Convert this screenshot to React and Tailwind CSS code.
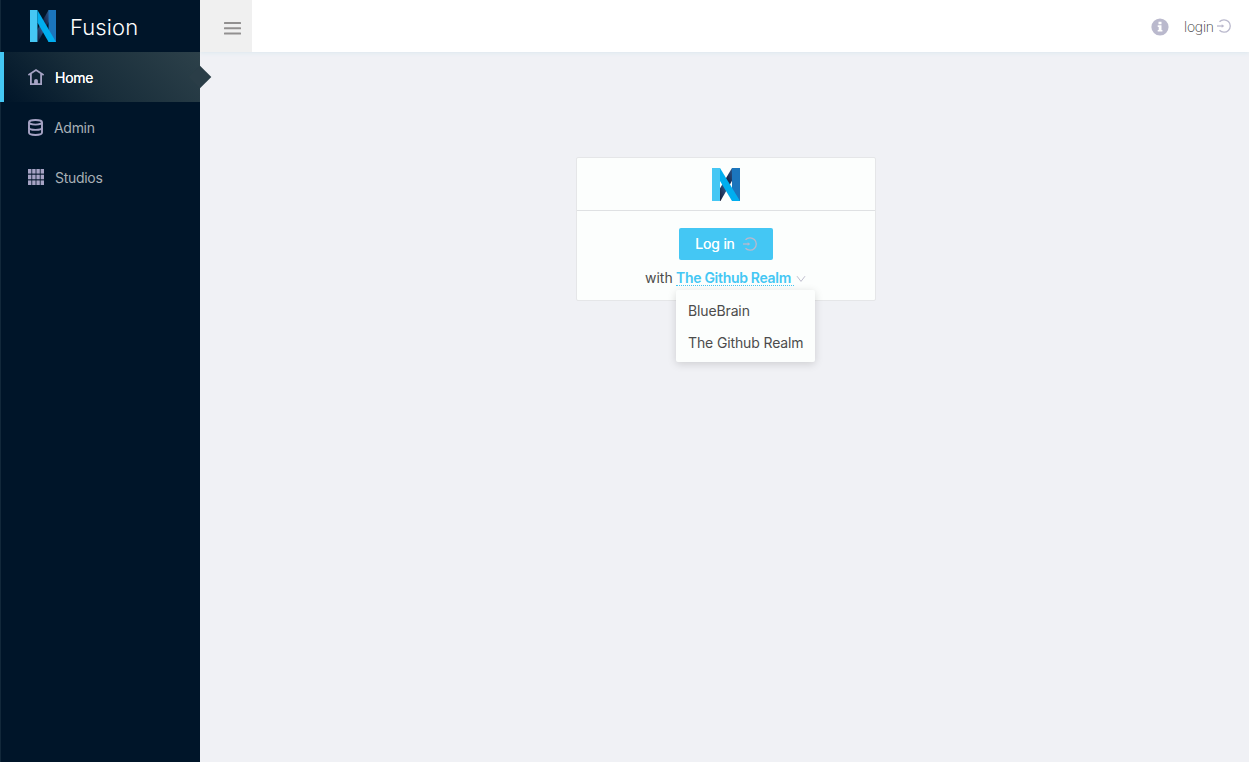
import React, { useId } from "react";

function Logo({ className }) {
  const id = useId();
  return (
    <svg viewBox="0 0 28 33" preserveAspectRatio="none" className={className} aria-hidden="true">
      <defs>
        <linearGradient id={id} x1="0" y1="1" x2="1" y2="0">
          <stop offset="0" stopColor="#10152f" />
          <stop offset="0.4" stopColor="#2d4f80" />
          <stop offset="0.62" stopColor="#182648" />
          <stop offset="1" stopColor="#2b5c94" />
        </linearGradient>
      </defs>
      <path d="M20 0h1v11L8.5 33H7V22z" fill={`url(#${id})`} />
      <path d="M20 0h8v33h-8z" fill="#1b75bc" />
      <path d="M0 0h8v33H0z" fill="#45c7f4" />
      <path d="M8 0l20 33h-8L8 13z" fill="#00aeef" />
    </svg>
  );
}

function HomeIcon() {
  return (
    <svg viewBox="0 0 16 16" className="size-4" fill="none" stroke="#a6a3c4" strokeWidth="1.8">
      <path d="M.4 6L8 1.1 15.6 6" />
      <path d="M2.9 5v10.1h10.2V5" />
      <path d="M6.1 15.5v-3.7a1.9 1.9 0 0 1 3.8 0v3.7z" fill="#a6a3c4" stroke="none" />
    </svg>
  );
}

function DatabaseIcon() {
  return (
    <svg viewBox="0 0 15 17" className="h-[17px] w-[15px]" fill="none" stroke="#a6a3c4" strokeWidth="1.9">
      <ellipse cx="7.5" cy="3.3" rx="6.5" ry="2.3" />
      <path d="M1 3.3v10.3c0 1.4 2.9 2.4 6.5 2.4s6.5-1 6.5-2.4V3.3" />
      <path d="M1 8.5c0 1.4 2.9 2.4 6.5 2.4s6.5-1 6.5-2.4" />
    </svg>
  );
}

function GridIcon() {
  const offsets = [0, 4.2, 8.4, 12.6];
  const rows = [0, 5.7, 11.4];
  return (
    <svg viewBox="0 0 16 16" className="size-4" fill="#a6a3c4">
      {rows.map((y) => offsets.map((x) => <rect key={`${x}-${y}`} x={x} y={y} width="3.4" height="4.6" />))}
    </svg>
  );
}

function LoginIcon({ className }) {
  return (
    <svg viewBox="0 0 14 14" className={className} fill="none" stroke="#bab9cd" strokeWidth="1.3">
      <path d="M2.5 2.8A6.2 6.2 0 1 1 2.5 11.2" />
      <path d="M0 7h6" />
      <path d="M4.7 5.2L7.3 7 4.7 8.8z" fill="#bab9cd" stroke="none" />
    </svg>
  );
}

function NavItem({ icon, label, active }) {
  return active ? (
    <li className="relative flex h-[50px] items-center border-l-4 border-[#44c7f4] bg-[linear-gradient(45deg,#001529_0%,#182d3a_45%,#2d414a_100%)] pl-6 text-white">
      {icon}
      <span className="ml-[11px] pt-0.5 tracking-[-0.25px] [text-shadow:0_0_0.5px_#fff]">{label}</span>
      <span className="absolute top-[17px] -right-2 size-4 rotate-45 bg-[#2a3d47]" />
    </li>
  ) : (
    <li className="flex h-[50px] items-center pl-7 text-[#a8b0b6]">
      {icon}
      <span className="ml-[11px] pt-0.5 tracking-[-0.3px]">{label}</span>
    </li>
  );
}

export default function App() {
  return (
    <div className="flex h-screen bg-[#f0f1f5] font-['Inter',sans-serif] text-[14px] leading-[22px] text-[#4c4c4c]">
      <aside className="relative z-10 w-[200px] shrink-0 bg-[#001529] shadow-[inset_1px_0_0_#12283a]">
        <div className="flex h-[52px] items-center pl-[30px]">
          <Logo className="h-8 w-[26px]" />
          <span className="ml-[14px] pt-0.5 text-[22px] font-light tracking-[0.1px] text-white">Fusion</span>
        </div>
        <ul>
          <NavItem icon={<HomeIcon />} label="Home" active />
          <NavItem icon={<DatabaseIcon />} label="Admin" />
          <NavItem icon={<GridIcon />} label="Studios" />
        </ul>
      </aside>
      <div className="flex flex-1 flex-col">
        <header className="flex h-[52px] shrink-0 items-center justify-between bg-white shadow-[0_1px_4px_#dce8ef]">
          <button className="flex h-[52px] w-[52px] items-center bg-[#f0f0f0] pl-6" aria-label="Toggle menu">
            <svg viewBox="0 0 17 13" className="mt-1 h-[13px] w-[17px]" fill="#929090">
              <rect width="17" height="2" rx=".5" />
              <rect y="5.3" width="17" height="2" rx=".5" />
              <rect y="10.6" width="17" height="2" rx=".5" />
            </svg>
          </button>
          <div className="flex items-center pr-[18px]">
            <svg viewBox="0 0 18 18" className="mt-px size-[18px]">
              <circle cx="9" cy="9" r="8.6" fill="#bab9cd" />
              <path d="M7.5 3.8h3v2.4h-3zM6.7 7.3h3.8v4.6h.9v1.6H6.7v-1.6h1V8.9h-1z" fill="#fff" />
            </svg>
            <a className="w-[46px] pt-0.5 pl-[15px] font-extralight tracking-[-0.25px] text-[#333]">login</a>
            <LoginIcon className="ml-0.5 size-[14px]" />
          </div>
        </header>
        <main className="flex justify-center pt-[105px] pl-[3px]">
          <section className="h-[144px] w-[300px] rounded-xs border border-[#e5e6e8] bg-[#fcfefd]">
            <div className="flex h-[53px] items-center justify-center border-b border-[#dfe1e3]">
              <Logo className="h-[33px] w-7" />
            </div>
            <div className="flex flex-col items-center pt-[17px]">
              <button className="flex h-8 w-[94px] items-center rounded-xs bg-[#44c7f4] pl-4 text-white">
                <span className="w-10 tracking-[-0.2px] whitespace-nowrap [text-shadow:0_0_0.5px_#fff]">Log in</span>
                <LoginIcon className="ml-2 size-[14px]" />
              </button>
              <div className="mt-[7px] flex w-[162px] items-center">
                <span className="w-[31px] whitespace-nowrap">with</span>
                <div className="relative flex items-center whitespace-nowrap">
                  <span className="h-4 w-[118px] border-b border-dotted border-[#44c7f4] leading-4 font-semibold tracking-[-0.3px] text-[#44c7f4]">The Github Realm</span>
                  <svg viewBox="0 0 8 6" className="ml-[3px] mt-0.5 h-1.5 w-2 overflow-visible" fill="none" stroke="#bfbece">
                    <path d="M0 .2L4 5.4 8 .2" />
                  </svg>
                  <ul className="absolute top-5 left-0 w-[139px] rounded-xs bg-[#fcfefd] pt-[5px] pb-[3px] tracking-[-0.13px] shadow-[0_2px_8px_rgba(0,0,0,0.15)]">
                    <li className="px-3 py-[5px]">BlueBrain</li>
                    <li className="px-3 py-[5px]">The Github Realm</li>
                  </ul>
                </div>
              </div>
            </div>
          </section>
        </main>
      </div>
    </div>
  );
}
